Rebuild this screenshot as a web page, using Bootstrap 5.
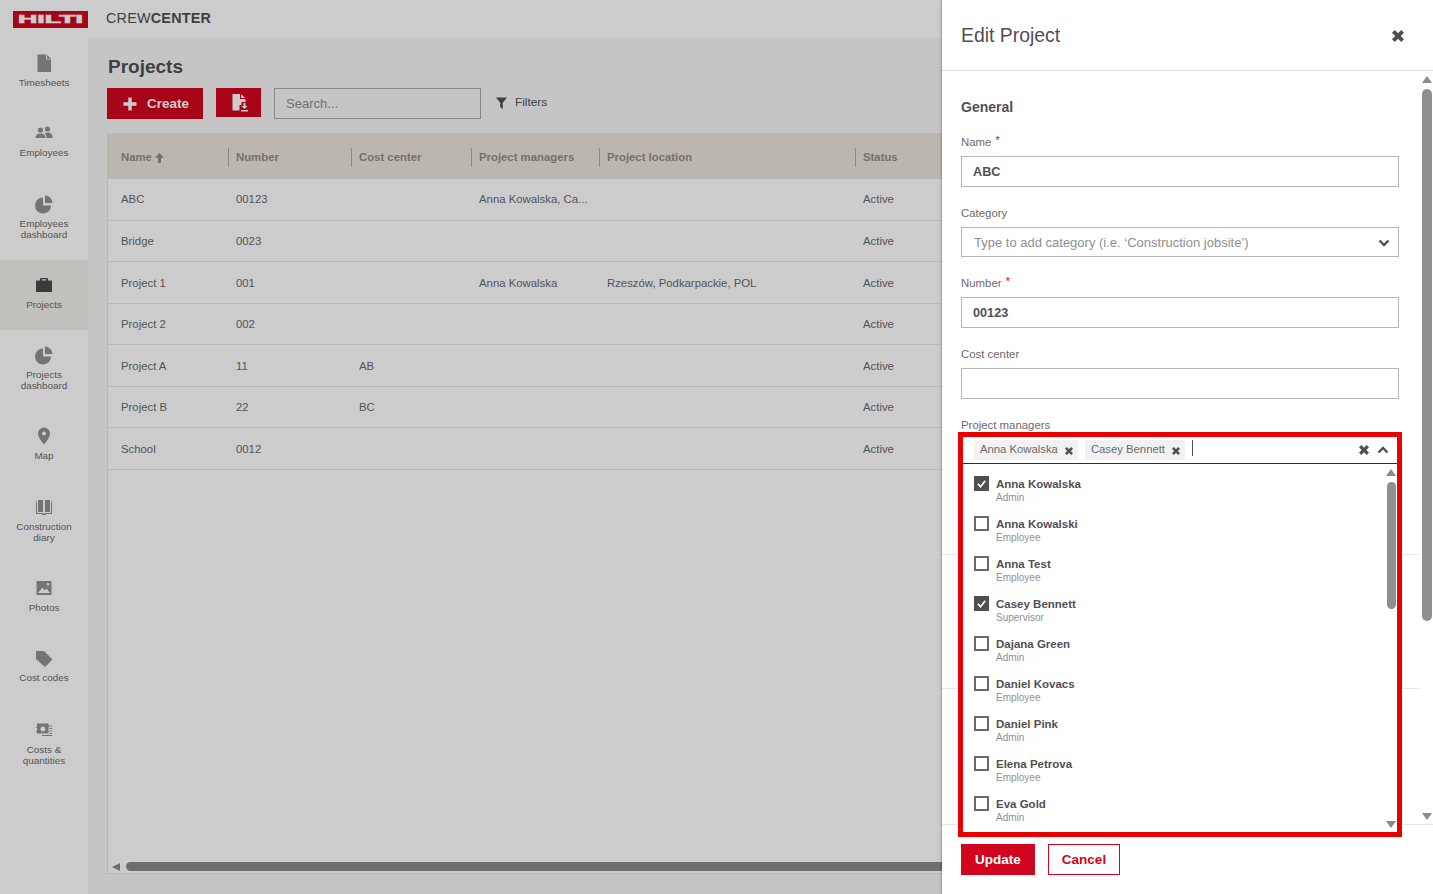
<!DOCTYPE html>
<html lang="en"><head><meta charset="utf-8"><title>Projects</title>
<link href="https://cdn.jsdelivr.net/npm/bootstrap@5.3.0/dist/css/bootstrap.min.css" rel="stylesheet">
<style>
html,body{height:894px;overflow:hidden}
body{font-family:"Liberation Sans",Arial,sans-serif;color:#524f53;background:#fff;position:relative;font-size:12px}
.topbar{height:38px;padding-left:13px;background:#fff}
.brand{font-size:14.4px;margin-left:18px;letter-spacing:.2px;color:#524f53;margin-top:-1px}
.shell{height:856px}
.sidenav{width:88px;flex:none;background:#fff}
.navitem{height:70.3px;padding-top:15px;font-size:9.9px;line-height:11.3px;color:#6b696c;text-align:center}
.navitem.tall{height:81.3px}
.navitem.low{padding-top:16px}
.navitem.on{background:#f2f1ec}
.navitem svg{display:block;margin:0 auto 4px;height:20px;width:20px;fill:#929192}
.navitem.on svg{fill:#4a484b}
.workarea{background:#f7f7f7;padding:17px 20px 20px 19px;min-width:0}
.pagehead{font-size:19px;font-weight:700;margin:0 0 10px 1px;line-height:23px;color:#524f53}
.tools{height:31px;margin-bottom:14px}
.redbtn{background:#d2051e;color:#fff;border:0;border-radius:0;font-weight:700;font-size:13.5px;line-height:1}
.redbtn.mk{width:96px;height:31px;margin-right:13px;padding:0 0 0 2px;gap:10px}
.redbtn.ex{width:45px;height:29px;margin-right:13px;padding:0}
.searchbox{width:207px;height:31px;border:1px solid #aaa;border-radius:0;background:transparent;font-size:13px;padding:0 11px}
.searchbox::placeholder{color:#8f8e90;opacity:1}
.filterlnk{margin-left:15px;font-size:11.8px;color:#524f53;height:29px}
.datatable{border:1px solid #e7e7e7;background:#fff;height:741px;width:1307px}
.grid-t{table-layout:fixed;width:1306px;margin:0}
.grid-t th,.grid-t td{padding:2px 0 0 8px;vertical-align:middle;font-size:11.35px;border-bottom:1px solid #e7e7e7;color:#6b696c;background:transparent;box-shadow:none;font-weight:400}
.grid-t th:first-child,.grid-t td:first-child{padding-left:13px}
.grid-t thead th{height:44px;background:#eae5dd;font-weight:700;color:#968c81;border-bottom:1px solid #e7e7e7;padding-top:3px}
.grid-t tbody td{height:41.5px}
.grid-t tbody tr:first-child td{height:42px}
.grid-t th+th span.hdcell{display:block;border-left:1px solid #b0aba4;margin-left:-8px;padding-left:7px;line-height:19px}
.hscroll{position:absolute;left:112px;top:862px;width:900px;height:9px}
.hscroll i{display:block;border-style:solid;border-width:4px 8px 4px 0;border-color:transparent #8a8a8a transparent transparent;width:0;height:0;margin:1px 6px 0 0;flex:none}
.hscroll b{display:block;background:#8a8a8a;border-radius:5px;height:9px;flex:1}
.veil{position:absolute;inset:0;background:rgba(0,0,0,.2)}
.sheet{position:absolute;top:0;right:0;bottom:0;width:491px;background:#fff;box-shadow:-1px 0 2px rgba(0,0,0,.25)}
.sheet-h{height:71px;border-bottom:1px solid #dcdcdc;padding:1px 29px 0 19px}
.sheet-h h1{font-size:19.4px;font-weight:400;margin:0;color:#524f53}
.sheet-b{height:753px;min-height:0}
.sheet-c{width:477px;padding:0 0 0 19px;position:relative}
.sect{font-size:14px;font-weight:700;margin:28px 0 21px;line-height:16px}
.fld{width:438px;margin-bottom:0}
.lbl{display:block;font-size:11.4px;line-height:13px;margin:0 0 7px;color:#6b696c}
.lbl em{color:#d2051e;font-style:normal;font-size:11px;line-height:0;vertical-align:2px;margin-left:1px}
.inp{height:31px;border:1px solid #b5b5b5;border-radius:0;font-size:12.7px;font-weight:700;padding:2px 11px 0;color:#524f53;margin-bottom:20px}
.inp.sel{height:30px;font-weight:400;color:#8f8e90;font-size:13px;display:flex;align-items:center;justify-content:space-between;padding:1px 8px 0 12px}
.rule1{border-top:1px solid #e7e7e7;margin-left:-19px;width:477px;position:absolute;top:483px}
.rule2{border-top:1px solid #e7e7e7;margin-left:-19px;width:477px;position:absolute;top:617px}
.vbar{width:14px;padding:5px 0 4px 2px;flex:none}
.arr-u,.arr-d{width:0;height:0;border-left:5px solid transparent;border-right:5px solid transparent;flex:none}
.arr-u{border-bottom:7px solid #8a8a8a}.arr-d{border-top:7px solid #8a8a8a}
.thumb{width:10px;background:#8f8f8f;border-radius:5px;margin-top:6px}
.sheet-f{height:70px;border-top:1px solid #e7e7e7;padding:19px 0 0 19px;gap:13px}
.sheet-f .btn{border-radius:0;font-weight:700;font-size:13.5px;height:31px;padding:0;line-height:29px}
.go{width:74px;background:#d2051e;color:#fff;border:1px solid #d2051e}
.stop{width:72px;background:#fff;color:#d2051e;border:1px solid #d2051e}
.flagbox{position:absolute;left:16px;top:361px;width:444px;height:405px;border:5px solid #e90000;background:#fff;z-index:2}
.combo{height:27px;border-bottom:1px solid #4e1d35;padding:3px 8px 0 11px}
.chip{background:#f2f2f2;height:20px;font-size:11.3px;color:#6b696c;padding:0 5px 2px 6px;margin-right:7px;gap:7px}
.chip svg{width:8px;height:8px;fill:#524f53;margin-top:3px}
.caret{width:1px;height:16px;background:#524f53}
.listwrap{height:368px;overflow:hidden}
.optlist{padding:12px 0 0 11px;list-style:none;margin:0}
.optlist li{height:40px;display:flex;gap:7px}
.tick{width:15px;height:15px;border:2px solid #6a686b;flex:none;margin-top:0;background:#fff;display:flex;align-items:center;justify-content:center}
.tick.yes{background:#524f53;border-color:#524f53}
.tick svg{width:11px;height:11px;stroke:#fff;stroke-width:1.8;fill:none}
.who{font-size:11.5px;font-weight:700;line-height:13px;padding-top:2px;color:#524f53}
.role{display:block;font-size:10px;font-weight:400;color:#8f8e90;line-height:13px}
.vbar2{width:12px;padding:5px 0 4px 0;flex:none;margin-left:auto}
.ic-x{width:10px;height:10px;fill:#524f53}
</style></head>
<body>
<div class="topbar d-flex align-items-center">
  <svg width="75" height="17" viewBox="0 0 75 17"><rect width="75" height="17" fill="#d2051e"/><text x="5" y="12.300" textLength="65" lengthAdjust="spacingAndGlyphs" font-family="Liberation Sans" font-weight="700" font-size="11" stroke="#fff" stroke-width=".6" fill="#fff">HILTI</text></svg>
  <span class="brand">CREW<strong>CENTER</strong></span>
</div>
<div class="shell d-flex">
  <nav class="sidenav">
    <div class="navitem"><svg viewBox="0 0 20 20"><path d="M3.500 1.500h8.500v5h5v12.500h-13.500z"/><path d="M13 1.800l4 4h-4z"/></svg>Timesheets</div>
    <div class="navitem"><svg viewBox="0 0 20 20"><circle cx="6.500" cy="7" r="2.600"/><circle cx="13.500" cy="6" r="2.600"/><path d="M1.500 15c0-3 2-4.500 5-4.500s5 1.500 5 4.500zM12.500 15c0-1.800-.5-3.200-1.700-4.500.8-.7 1.800-1 2.900-1 2.800 0 4.800 1.500 4.800 4.200v1.300z"/></svg>Employees</div>
    <div class="navitem tall"><svg viewBox="0 0 20 20"><path d="M9 3.500v8h8a8 8 0 1 1-8-8z"/><path d="M11 1.500a7.500 7.500 0 0 1 7.500 7.500H11z"/></svg>Employees<br>dashboard</div>
    <div class="navitem on"><svg viewBox="0 0 20 20"><path d="M7 3h6a1 1 0 0 1 1 1v1.500h4V17H2V5.500h4V4a1 1 0 0 1 1-1zm.800 1.200v1.300h4.400V4.200z" fill-rule="evenodd"/></svg>Projects</div>
    <div class="navitem tall"><svg viewBox="0 0 20 20"><path d="M9 3.500v8h8a8 8 0 1 1-8-8z"/><path d="M11 1.500a7.500 7.500 0 0 1 7.500 7.500H11z"/></svg>Projects<br>dashboard</div>
    <div class="navitem"><svg viewBox="0 0 20 20"><path fill-rule="evenodd" d="M10 1.500a6 6 0 0 1 6 6c0 4-4 8.500-6 11-2-2.500-6-7-6-11a6 6 0 0 1 6-6zm0 4a2 2 0 1 0 0 4 2 2 0 0 0 0-4z"/></svg>Map</div>
    <div class="navitem tall"><svg viewBox="0 0 20 20"><path d="M4 3h5v12H4zM11 3h5v12h-5zM2 4.500h1V16h6.500v1h1v-1H17V4.500h1V17h-6v1H8v-1H2z"/></svg>Construction<br>diary</div>
    <div class="navitem"><svg viewBox="0 0 20 20"><path fill-rule="evenodd" d="M2.500 3h15v14h-15zM14 5a1.300 1.300 0 1 0 0 2.600A1.300 1.300 0 0 0 14 5zM4 15h12l-3.500-4.500-2 2-2-3z"/></svg>Photos</div>
    <div class="navitem"><svg viewBox="0 0 20 20"><path fill-rule="evenodd" d="M2 3h8l8.500 8.500-7.500 7.500L2 11z"/></svg>Cost codes</div>
    <div class="navitem tall low"><svg viewBox="0 0 20 20"><path fill-rule="evenodd" d="M3 3.500h11.500v2H18v1h-3.500v7H3v-1.500H2v-1h1V8H2V7h1zm6 3a2.500 2.500 0 1 0 0 5 2.500 2.500 0 0 0 0-5zM15.500 8H18v1h-2.500zm0 2.500H18v1h-2.500zm0 2.500H18v1h-2.500zM8 15h10v1H8z"/></svg>Costs &amp;<br>quantities</div>
  </nav>
  <main class="workarea flex-grow-1">
    <h2 class="pagehead">Projects</h2>
    <div class="tools d-flex align-items-start">
      <button class="btn redbtn mk d-flex align-items-center justify-content-center"><svg width="14" height="14" viewBox="0 0 14 14"><path d="M5.300 0.500h3.400v4.800h4.800v3.400H8.700v4.800H5.300V8.700H0.500V5.300h4.800z" fill="#fff"/></svg>Create</button>
      <button class="btn redbtn ex d-flex align-items-center justify-content-center" aria-label="Export"><svg width="18" height="18" viewBox="0 0 18 18"><path fill="#fff" d="M2.500 0H10v5h5.500v3h-4v3h-2v5.500h-7zM11 .3L15.300 4H11zM13.500 9h2v3h2l-3 3-3-3h2zM11 16h7v1.500h-7z"/></svg></button>
      <input class="form-control searchbox" placeholder="Search...">
      <div class="filterlnk d-flex align-items-center gap-2"><svg width="11" height="12" viewBox="0 0 11 12"><path d="M0 .5h11L6.800 5.800V12L4.200 10V5.800z" fill="#524f53"/></svg>Filters</div>
    </div>
    <div class="datatable">
      <table class="table grid-t">
        <colgroup><col style="width:120px"><col style="width:123px"><col style="width:120px"><col style="width:128px"><col style="width:256px"><col></colgroup>
        <thead><tr><th>Name <svg width="9" height="10" viewBox="0 0 9 10"><path d="M4.500 0L9 4.800H6V10H3V4.800H0z" fill="#968c81"/></svg></th><th><span class="hdcell">Number</span></th><th><span class="hdcell">Cost center</span></th><th><span class="hdcell">Project managers</span></th><th><span class="hdcell">Project location</span></th><th><span class="hdcell">Status</span></th></tr></thead>
        <tbody>
          <tr><td>ABC</td><td>00123</td><td></td><td>Anna Kowalska, Ca...</td><td></td><td>Active</td></tr>
          <tr><td>Bridge</td><td>0023</td><td></td><td></td><td></td><td>Active</td></tr>
          <tr><td>Project 1</td><td>001</td><td></td><td>Anna Kowalska</td><td>Rzeszów, Podkarpackie, POL</td><td>Active</td></tr>
          <tr><td>Project 2</td><td>002</td><td></td><td></td><td></td><td>Active</td></tr>
          <tr><td>Project A</td><td>11</td><td>AB</td><td></td><td></td><td>Active</td></tr>
          <tr><td>Project B</td><td>22</td><td>BC</td><td></td><td></td><td>Active</td></tr>
          <tr><td>School</td><td>0012</td><td></td><td></td><td></td><td>Active</td></tr>
        </tbody>
      </table>
    </div>
  </main>
</div>
<div class="hscroll d-flex"><i></i><b></b></div>
<div class="veil"></div>
<aside class="sheet d-flex flex-column">
  <header class="sheet-h d-flex align-items-center justify-content-between">
    <h1>Edit Project</h1>
    <svg width="12" height="12" viewBox="0 0 12 12" aria-label="Close"><path d="M2.800 0L6 3.200 9.200 0 12 2.800 8.800 6 12 9.200 9.200 12 6 8.800 2.800 12 0 9.200 3.200 6 0 2.800z" fill="#524f53"/></svg>
  </header>
  <div class="sheet-b d-flex">
    <div class="sheet-c">
      <div class="sect">General</div>
      <div class="fld"><label class="lbl">Name <em>*</em></label><div class="inp d-flex align-items-center">ABC</div></div>
      <div class="fld"><label class="lbl">Category</label><div class="inp sel">Type to add category (i.e. ‘Construction jobsite’)<svg width="12" height="8" viewBox="0 0 12 8"><path d="M1.500 1.500L6 6l4.500-4.500" stroke="#524f53" stroke-width="2.400" fill="none"/></svg></div></div>
      <div class="fld"><label class="lbl">Number <em>*</em></label><div class="inp d-flex align-items-center">00123</div></div>
      <div class="fld"><label class="lbl">Cost center</label><div class="inp"></div></div>
      <div class="fld"><label class="lbl">Project managers</label></div>
      <div class="rule1"></div><div class="rule2"></div>
      <div class="flagbox d-flex flex-column">
        <div class="combo d-flex align-items-start">
          <span class="chip d-flex align-items-center">Anna Kowalska<svg viewBox="0 0 12 12"><path d="M2.800 0L6 3.200 9.200 0 12 2.800 8.800 6 12 9.200 9.200 12 6 8.800 2.800 12 0 9.200 3.200 6 0 2.800z"/></svg></span>
          <span class="chip d-flex align-items-center">Casey Bennett<svg viewBox="0 0 12 12"><path d="M2.800 0L6 3.200 9.200 0 12 2.800 8.800 6 12 9.200 9.200 12 6 8.800 2.800 12 0 9.200 3.200 6 0 2.800z"/></svg></span>
          <span class="caret"></span>
          <span class="ms-auto d-flex align-items-center gap-2" style="height:20px"><svg class="ic-x" viewBox="0 0 12 12"><path d="M2.800 0L6 3.200 9.200 0 12 2.800 8.800 6 12 9.200 9.200 12 6 8.800 2.800 12 0 9.200 3.200 6 0 2.800z"/></svg><svg width="12" height="8" viewBox="0 0 12 8"><path d="M1.500 6.500L6 2l4.500 4.500" stroke="#524f53" stroke-width="2.400" fill="none"/></svg></span>
        </div>
        <div class="listwrap d-flex">
          <ul class="optlist flex-grow-1">
            <li><span class="tick yes"><svg viewBox="0 0 12 12"><path d="M2 6.500l3 3 5-6.500"/></svg></span><span class="who">Anna Kowalska<span class="role">Admin</span></span></li>
            <li><span class="tick"></span><span class="who">Anna Kowalski<span class="role">Employee</span></span></li>
            <li><span class="tick"></span><span class="who">Anna Test<span class="role">Employee</span></span></li>
            <li><span class="tick yes"><svg viewBox="0 0 12 12"><path d="M2 6.500l3 3 5-6.500"/></svg></span><span class="who">Casey Bennett<span class="role">Supervisor</span></span></li>
            <li><span class="tick"></span><span class="who">Dajana Green<span class="role">Admin</span></span></li>
            <li><span class="tick"></span><span class="who">Daniel Kovacs<span class="role">Employee</span></span></li>
            <li><span class="tick"></span><span class="who">Daniel Pink<span class="role">Admin</span></span></li>
            <li><span class="tick"></span><span class="who">Elena Petrova<span class="role">Employee</span></span></li>
            <li><span class="tick"></span><span class="who">Eva Gold<span class="role">Admin</span></span></li>
          </ul>
          <div class="vbar2 d-flex flex-column align-items-center"><span class="arr-u"></span><span class="thumb" style="height:127px;width:9px"></span><span class="arr-d mt-auto"></span></div>
        </div>
      </div>
    </div>
    <div class="vbar d-flex flex-column align-items-center"><span class="arr-u"></span><span class="thumb" style="height:532px"></span><span class="arr-d mt-auto"></span></div>
  </div>
  <footer class="sheet-f d-flex">
    <button class="btn go">Update</button><button class="btn stop">Cancel</button>
  </footer>
</aside>
</body></html>
